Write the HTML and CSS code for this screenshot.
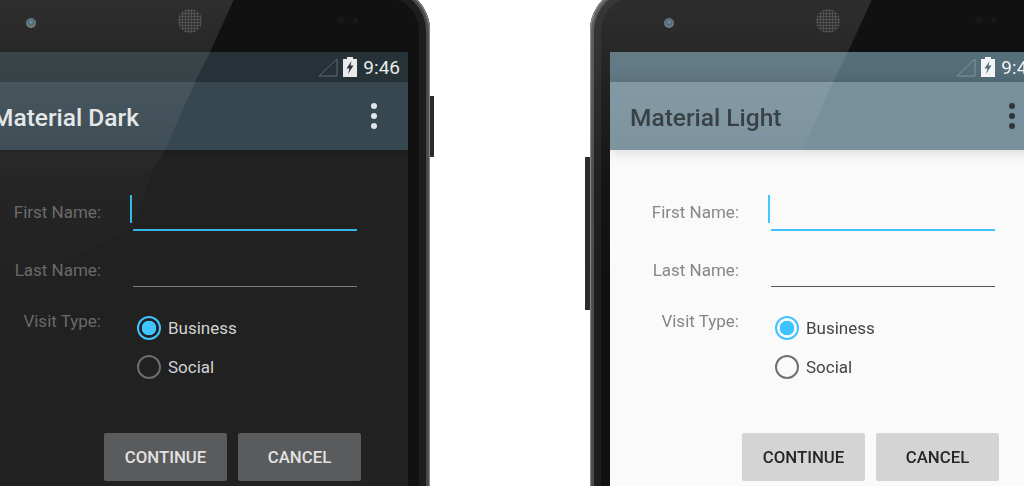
FILE: index.html
```html
<!DOCTYPE html>
<html lang="en">
  <head>
    <meta http-equiv="content-type" content="text/html; charset=UTF-8" />
    <title>Material themes</title>
    <link rel="stylesheet" href="styles.css">
  </head>

  <body>
    <div class="stage">
      <div class="phone dark">
        <span class="sideKey powerKey"></span>
        <span class="sideKey volumeKey"></span>
        <div class="bezel">
          <span class="camera"></span>
          <span class="speaker"></span>
          <span class="sensors"><i></i><i></i></span>
        </div>
        <div class="screen">
          <div class="statusBar">
            <svg class="signal" width="20" height="19" viewBox="0 0 20 19"><path d="M19 1V18H1Z" fill="none" stroke="currentColor" stroke-width="1" /></svg>
            <svg class="battery" width="14" height="20" viewBox="0 0 14 20"><path fill="currentColor" fill-rule="evenodd" d="M4 0H10V2H14V20H0V2H4ZM8.500 4L3.500 11.500H6.500L5 17L10.500 8.500H7.500Z" /></svg>
            <span class="clock">9:46</span>
          </div>
          <div class="appBar">
            <h1 class="appTitle">Material Dark</h1>
            <div class="overflowMenu"><i></i><i></i><i></i></div>
          </div>
          <div class="form">
            <div class="row firstRow">
              <label class="fieldLabel">First Name:</label>
              <div class="field focused"><span class="caret"></span></div>
            </div>
            <div class="row lastRow">
              <label class="fieldLabel">Last Name:</label>
              <div class="field"></div>
            </div>
            <div class="row visitRow">
              <label class="fieldLabel">Visit Type:</label>
              <div class="radioGroup">
                <div class="radioItem"><span class="radio checked"></span>Business</div>
                <div class="radioItem"><span class="radio"></span>Social</div>
              </div>
            </div>
            <div class="actions">
              <button class="action">CONTINUE</button>
              <button class="action">CANCEL</button>
            </div>
          </div>
        </div>
        <div class="glare"></div>
      </div>

      <div class="phone light">
        <span class="sideKey powerKey"></span>
        <span class="sideKey volumeKey"></span>
        <div class="bezel">
          <span class="camera"></span>
          <span class="speaker"></span>
          <span class="sensors"><i></i><i></i></span>
        </div>
        <div class="screen">
          <div class="statusBar">
            <svg class="signal" width="20" height="19" viewBox="0 0 20 19"><path d="M19 1V18H1Z" fill="none" stroke="currentColor" stroke-width="1" /></svg>
            <svg class="battery" width="14" height="20" viewBox="0 0 14 20"><path fill="currentColor" fill-rule="evenodd" d="M4 0H10V2H14V20H0V2H4ZM8.500 4L3.500 11.500H6.500L5 17L10.500 8.500H7.500Z" /></svg>
            <span class="clock">9:46</span>
          </div>
          <div class="appBar">
            <h1 class="appTitle">Material Light</h1>
            <div class="overflowMenu"><i></i><i></i><i></i></div>
          </div>
          <div class="form">
            <div class="row firstRow">
              <label class="fieldLabel">First Name:</label>
              <div class="field focused"><span class="caret"></span></div>
            </div>
            <div class="row lastRow">
              <label class="fieldLabel">Last Name:</label>
              <div class="field"></div>
            </div>
            <div class="row visitRow">
              <label class="fieldLabel">Visit Type:</label>
              <div class="radioGroup">
                <div class="radioItem"><span class="radio checked"></span>Business</div>
                <div class="radioItem"><span class="radio"></span>Social</div>
              </div>
            </div>
            <div class="actions">
              <button class="action">CONTINUE</button>
              <button class="action">CANCEL</button>
            </div>
          </div>
        </div>
        <div class="glare"></div>
      </div>
    </div>
  </body>
</html>
```

FILE: styles.css
```css
html,
body {
  margin: 0;
  height: 486px;
  overflow: hidden;
  background-color: white;
  font-family: Roboto, "Liberation Sans", sans-serif;
}
.stage {
  display: flex;
  gap: 160px;
  height: 500px;
  margin: -14px 0 0 -48px;
  overflow: hidden;
  filter: blur(0.45px);
}

/* handset */
.phone {
  position: relative;
  flex: none;
  width: 478px;
  height: 540px;
  border-radius: 45px 45px 0 0;
  background-color: #111;
  box-shadow: inset 0 0 1px 1px #8d8d8d, inset 0 0 0 4px #4a4a4a, inset 0 0 0 11px #1d1d1d;
}
.sideKey {
  position: absolute;
  background-color: #2b2b2b;
}
.powerKey {
  top: 110px;
  right: -4px;
  width: 4px;
  height: 61px;
}
.volumeKey {
  top: 171px;
  left: -5px;
  width: 5px;
  height: 153px;
}
.bezel {
  position: absolute;
  top: 0;
  left: 0;
  right: 0;
  height: 66px;
}
.camera {
  position: absolute;
  top: 32px;
  left: 74px;
  width: 10px;
  height: 10px;
  border-radius: 50%;
  background: radial-gradient(circle at 50% 40%, #5d8fa8 0, #3c5563 35%, #777 75%, #444 100%);
}
.speaker {
  position: absolute;
  top: 23px;
  left: 226px;
  width: 24px;
  height: 24px;
  border-radius: 50%;
  background: radial-gradient(#3a3a3a 1px, transparent 1.2px) 0 0 / 3px 3px, #161616;
}
.sensors {
  position: absolute;
  top: 30px;
  left: 385px;
  display: flex;
  align-items: center;
  gap: 8px;
}
.sensors i {
  width: 8px;
  height: 8px;
  border-radius: 50%;
  background-color: #171717;
}
.sensors i + i {
  width: 5px;
  height: 5px;
  background-color: #1b1b1b;
}
.glare {
  position: absolute;
  inset: 0;
  pointer-events: none;
  background: linear-gradient(to bottom, rgba(255, 255, 255, 0.13), rgba(255, 255, 255, 0.075) 108px, rgba(255, 255, 255, 0.04) 170px, rgba(255, 255, 255, 0.02) 190px, rgba(255, 255, 255, 0.004) 300px);
  clip-path: polygon(11px 0, 288px 0, 258px 66px, 243px 96px, 213px 164px, 201px 184px, 181px 241px, 48px 311px, 0 328px, 0 30px);
}

/* screen */
.screen {
  position: absolute;
  top: 66px;
  left: 20px;
  width: 436px;
  bottom: 0;
  background-color: #212121;
  color: #d2d2d2;
}
.light .screen {
  background-color: #fafafa;
  color: #444;
}
.statusBar {
  display: flex;
  align-items: center;
  justify-content: flex-end;
  gap: 5px;
  height: 30px;
  padding-right: 8px;
  box-sizing: border-box;
  background-color: #263238;
  color: #e8eaeb;
}
.light .statusBar {
  background-color: #546e7a;
  color: #f2f4f5;
}
.signal {
  color: #5f6b70;
}
.light .signal {
  color: #83959e;
}
.clock {
  margin-left: 1px;
  font-size: 19px;
}
.appBar {
  display: flex;
  align-items: center;
  justify-content: space-between;
  height: 68px;
  padding: 0 31px 0 20px;
  box-sizing: border-box;
  background-color: #37474f;
  color: #e3e6e7;
}
.light .appBar {
  background-color: #78909c;
  color: #2d3539;
}
.dark .appBar {
  box-shadow: 0 2px 3px rgba(0, 0, 0, 0.2);
}
.light .appBar {
  box-shadow: 0 1px 14px rgba(0, 0, 0, 0.16);
}
.appTitle {
  margin: 3px 0 0;
  font-size: 24.500px;
  font-weight: 500;
}
.overflowMenu {
  display: flex;
  flex-direction: column;
  gap: 4px;
}
.overflowMenu i {
  width: 6px;
  height: 6px;
  border-radius: 50%;
  background-color: currentColor;
}

/* form */
.form {
  padding-top: 45px;
  font-size: 17px;
}
.row {
  display: grid;
  grid-template-columns: 129px 224px;
  gap: 32px;
  align-items: center;
  margin-bottom: 20px;
}
.fieldLabel {
  text-align: right;
  color: #696969;
}
.light .fieldLabel {
  color: #868686;
}
.firstRow .fieldLabel {
  padding-bottom: 2px;
}
.lastRow .fieldLabel {
  padding-top: 2px;
}
.field {
  height: 36px;
  box-sizing: border-box;
  border-bottom: 1px solid #7a7a7a;
}
.light .field {
  border-bottom-color: #555;
}
.focused,
.light .focused {
  border-bottom: 2px solid #33b5e5;
}
.light .focused {
  border-bottom-color: #40c4ff;
}
.caret {
  display: block;
  width: 2px;
  height: 28px;
  margin-left: -3px;
  background-color: #33b5e5;
}
.light .caret {
  background-color: #40c4ff;
}
.visitRow {
  align-items: start;
  margin-bottom: 0;
}
.visitRow .fieldLabel {
  margin-top: 4px;
}
.radioGroup {
  display: flex;
  flex-direction: column;
  gap: 15px;
  padding: 9px 0 0 4px;
}
.radioItem {
  display: flex;
  align-items: center;
  gap: 7px;
  height: 24px;
}
.radio {
  width: 24px;
  height: 24px;
  box-sizing: border-box;
  border: 2px solid #6b6b6b;
  border-radius: 50%;
}
.light .radio {
  border-color: #707070;
}
.radio.checked,
.light .radio.checked {
  border-color: #40c4ff;
  background: radial-gradient(circle, #40c4ff 0, #40c4ff 7px, transparent 7.600px);
}
.actions {
  display: flex;
  justify-content: flex-end;
  gap: 11px;
  padding: 54px 47px 0 0;
}
.action {
  width: 123px;
  height: 48px;
  padding: 0;
  border: 0;
  border-radius: 2px;
  background-color: #5a5b5c;
  color: #e2e2e2;
  font-family: Roboto, "Liberation Sans", sans-serif;
  font-size: 16.800px;
  font-weight: 500;
}
.light .action {
  background-color: #d4d4d4;
  color: #262626;
}
```
